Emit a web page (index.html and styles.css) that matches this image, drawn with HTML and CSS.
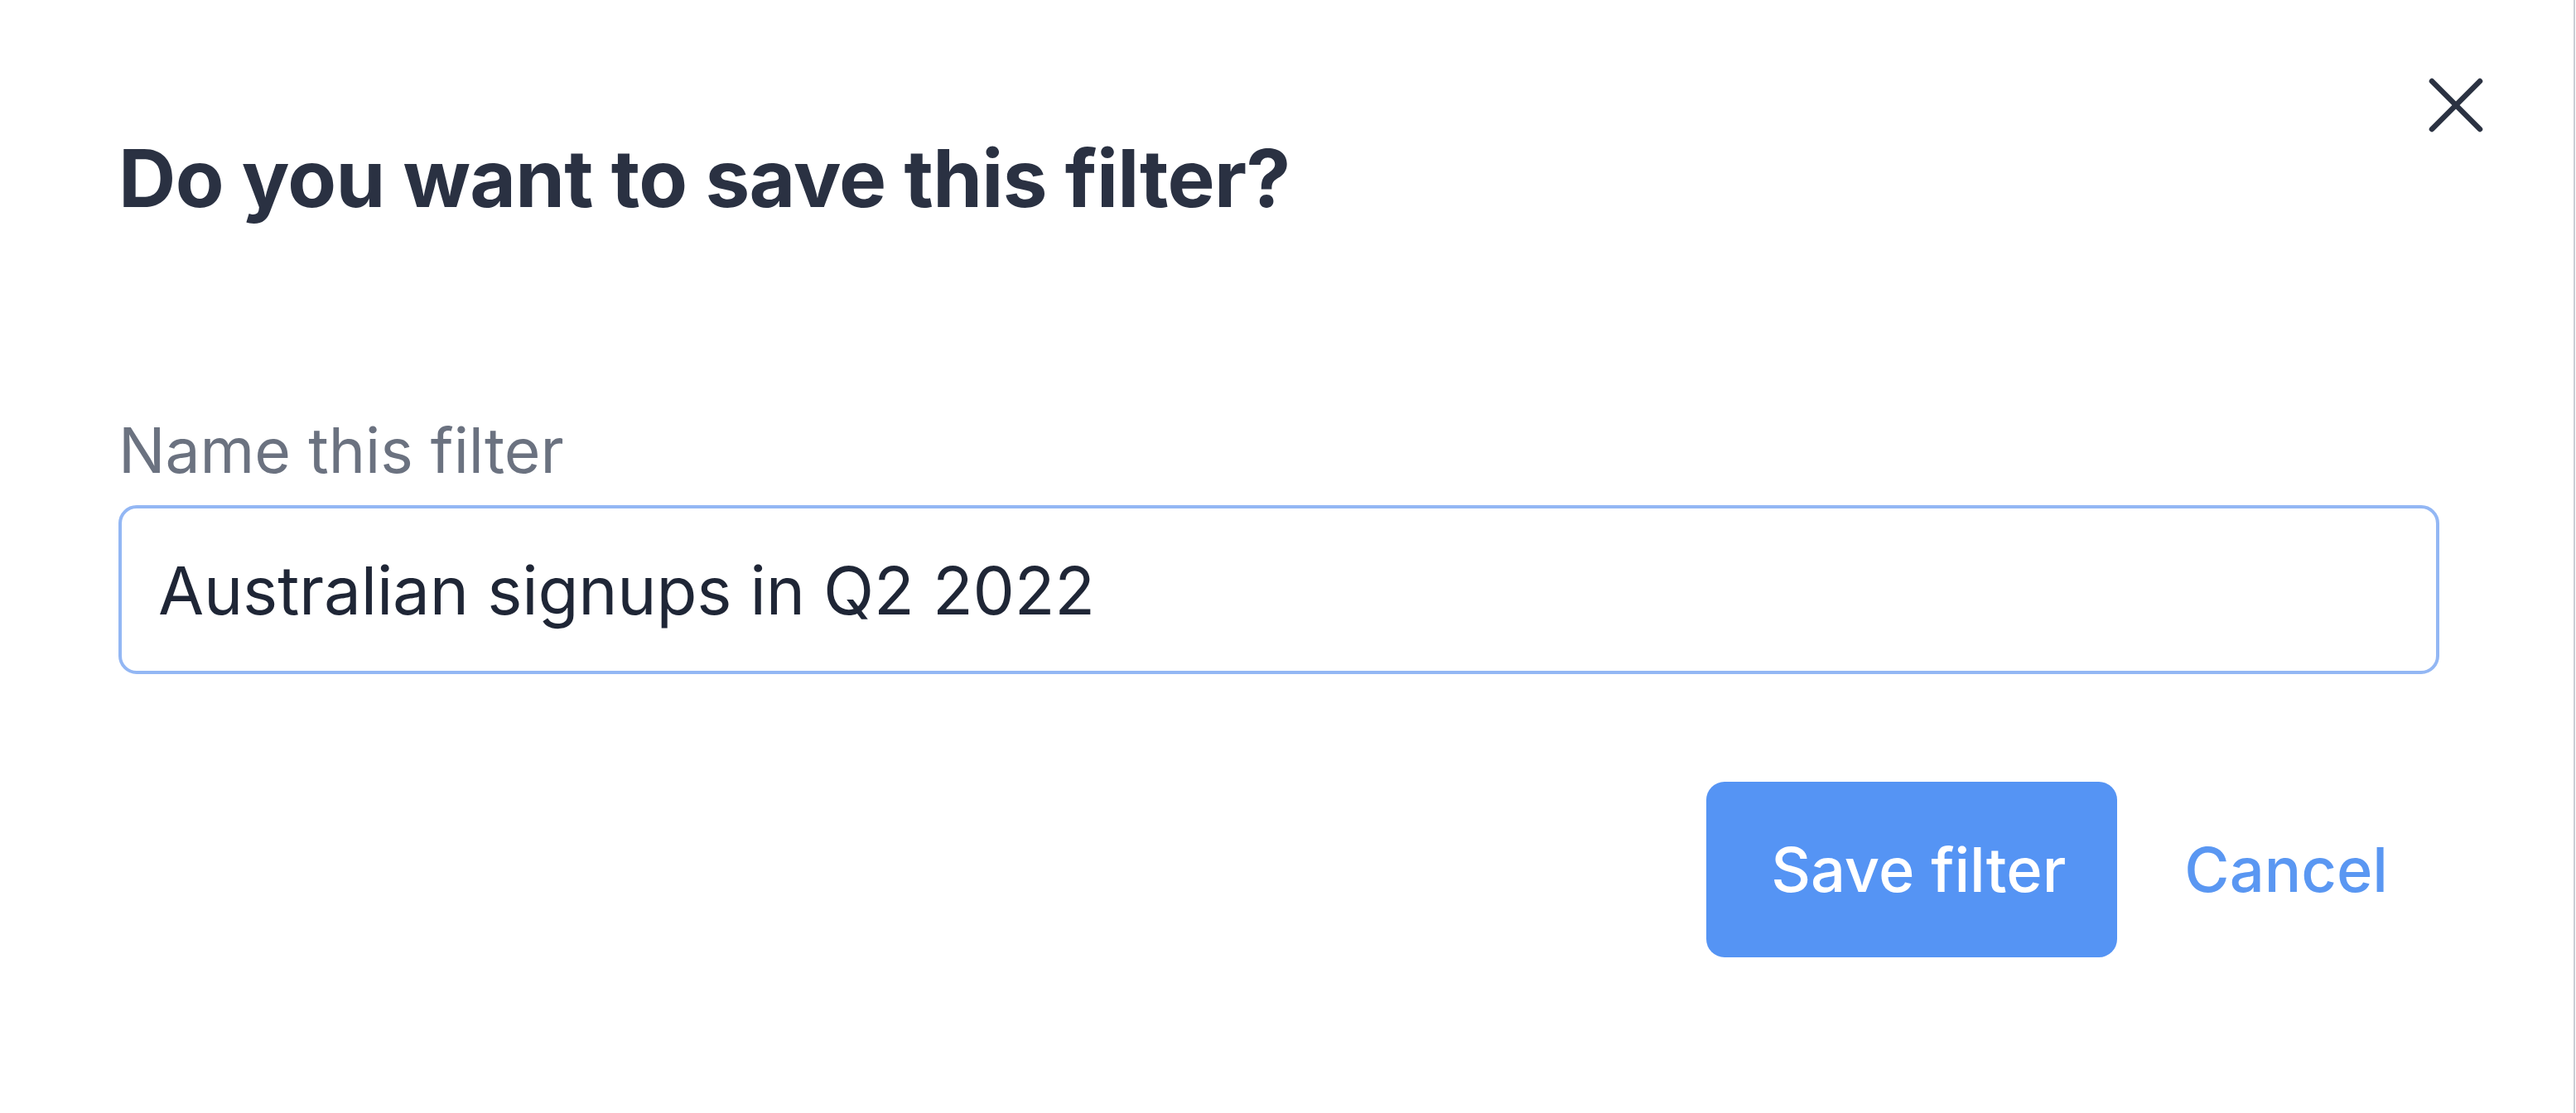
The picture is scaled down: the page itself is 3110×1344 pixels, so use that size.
FILE: index.html
```html
<!DOCTYPE html>
<html lang="en">
<head>
<meta charset="utf-8">
<title>Save filter</title>
<link rel="stylesheet" href="styles.css">
</head>
<body>
<div class="dialog">
  <div class="header">
    <h1 class="title">Do you want to save this filter?</h1>
    <button class="close" aria-label="Close">
      <svg width="66" height="66" viewBox="0 0 66 66" fill="none" stroke="#2b3242" stroke-width="6.5" stroke-linecap="round">
        <line x1="4" y1="4" x2="62" y2="62"/>
        <line x1="62" y1="4" x2="4" y2="62"/>
      </svg>
    </button>
  </div>
  <label class="label" for="name">Name this filter</label>
  <input class="input" id="name" type="text" value="Australian signups in Q2 2022">
  <div class="actions">
    <button class="btn btn-primary">Save filter</button>
    <button class="btn btn-link">Cancel</button>
  </div>
</div>
</body>
</html>
```
FILE: styles.css
```css
html, body {
  margin: 0;
  padding: 0;
  background: #ffffff;
}
body {
  font-family: Inter, "Noto Sans", sans-serif;
  width: 3110px;
  height: 1344px;
  overflow: hidden;
}
.dialog {
  box-sizing: border-box;
  width: 3109px;
  height: 1344px;
  padding: 94px 162px 0 143px;
  border-right: 2px solid #c9cdd4;
  display: flex;
  flex-direction: column;
}
.header {
  display: flex;
  justify-content: space-between;
  align-items: flex-start;
}
.title {
  margin: 57px 0 0 0;
  font-size: 96px;
  line-height: 128px;
  font-weight: 700;
  color: #2a3142;
  letter-spacing: -0.7px;
}
.close {
  margin: 0 -53px 0 0;
  padding: 0;
  border: 0;
  background: none;
  width: 66px;
  height: 66px;
  display: flex;
}
.label {
  margin-top: 217px;
  font-size: 75px;
  line-height: 96px;
  color: #6b7280;
  font-weight: 400;
}
.input {
  margin-top: 18px;
  box-sizing: border-box;
  width: 2802px;
  height: 204px;
  border: 4px solid #93b7f4;
  border-radius: 22px;
  padding: 0 44px;
  font-family: Inter, "Noto Sans", sans-serif;
  font-size: 80px;
  letter-spacing: -0.2px;
  line-height: 112px;
  color: #1f2636;
  outline: none;
  background: #ffffff;
}
.actions {
  margin-top: 130px;
  display: flex;
  justify-content: flex-end;
  gap: 14px;
}
.btn {
  font-family: Inter, "Noto Sans", sans-serif;
  font-size: 74px;
  font-weight: 500;
  line-height: 112px;
  height: 212px;
  border: 0;
  border-radius: 22px;
  cursor: pointer;
}
.btn-primary {
  background: #5594f4;
  color: #ffffff;
  padding: 0 62px 0 78px;
}
.btn-link {
  background: transparent;
  color: #5a97f2;
  padding: 0 62px 0 67px;
}
```
